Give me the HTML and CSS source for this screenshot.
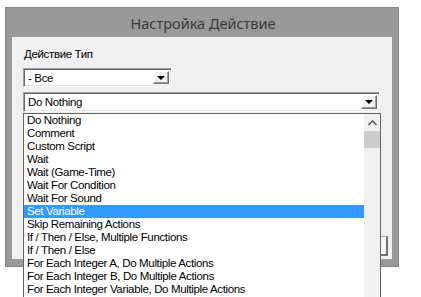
FILE: index.html
```html
<!DOCTYPE html>
<html>
<head>
<meta charset="utf-8">
<link rel="stylesheet" href="styles.css">
</head>
<body>
<div class="frame">
  <div class="title">Настройка Действие</div>
  <div class="panel">
    <div class="label">Действие Тип</div>
    <div class="combo combo-small"><span class="val">- Все</span><span class="btn"><span class="arrow"></span></span></div>
    <div class="combo combo-wide"><span class="val">Do Nothing</span><span class="btn"><span class="arrow"></span></span></div>
    <div class="buttons"><div class="pbtn"></div></div>
  </div>
</div>
<div class="dropdown">
  <ul class="items">
    <li>Do Nothing</li>
    <li>Comment</li>
    <li>Custom Script</li>
    <li>Wait</li>
    <li>Wait (Game-Time)</li>
    <li>Wait For Condition</li>
    <li>Wait For Sound</li>
    <li class="sel">Set Variable</li>
    <li>Skip Remaining Actions</li>
    <li>If / Then / Else, Multiple Functions</li>
    <li>If / Then / Else</li>
    <li>For Each Integer A, Do Multiple Actions</li>
    <li>For Each Integer B, Do Multiple Actions</li>
    <li>For Each Integer Variable, Do Multiple Actions</li>
  </ul>
  <div class="scroll">
    <div class="up"><svg width="9" height="6" viewBox="0 0 9 6"><path d="M0.5 5 L4.5 1 L8.5 5" fill="none" stroke="#606060" stroke-width="1.6"/></svg></div>
    <div class="thumb"></div>
  </div>
</div>
</body>
</html>
```
FILE: styles.css
```css
* { box-sizing: border-box; }
html, body { margin: 0; padding: 0; background: #ffffff; }
body { position: relative; width: 421px; height: 297px; overflow: hidden; font-family: "Liberation Sans", Arial, sans-serif; font-size: 11.5px; letter-spacing: -0.35px; color: #000; }

.frame {
  margin: 7px 0 0 5px;
  width: 394px;
  height: 260px;
  background: #999999;
  border: 1px solid #858585;
  padding: 0 6px;
}
.title {
  height: 29px;
  line-height: 30px;
  text-align: center;
  font-family: "Noto Sans", "Open Sans", sans-serif;
  font-size: 14.5px;
  letter-spacing: 0;
  color: #3a3a3a;
  padding-left: 2px;
}
.panel {
  width: 380px;
  height: 222px;
  background: #f0f0f0;
  padding: 11px 0 3px 11px;
  display: flex;
  flex-direction: column;
}
.label { height: 13px; line-height: 13px; padding-left: 1px; }

.combo {
  display: flex;
  align-items: stretch;
  height: 19px;
  background: #fff;
  border-top: 1px solid #a0a0a0;
  border-left: 1px solid #a0a0a0;
  border-right: 1px solid #ffffff;
  border-bottom: 1px solid #ffffff;
  box-shadow: inset 1px 1px 0 #696969, inset -1px -1px 0 #e3e3e3;
  padding: 2px;
}
.combo-small { width: 149px; margin-top: 7px; }
.combo-wide { width: 357px; margin-top: 5px; height: 20px; }
.val { flex: 1; line-height: 14px; padding-left: 2px; }
.btn {
  width: 16px;
  background: #f0f0f0;
  border-top: 1px solid #ffffff;
  border-left: 1px solid #ffffff;
  border-right: 1px solid #696969;
  border-bottom: 1px solid #696969;
  box-shadow: inset -1px -1px 0 #a0a0a0;
  display: flex;
  align-items: center;
  justify-content: center;
}
.arrow {
  width: 0; height: 0;
  border-left: 4px solid transparent;
  border-right: 4px solid transparent;
  border-top: 4px solid #000;
  margin-right: 1px;
}
.buttons { margin-top: auto; display: flex; justify-content: flex-end; padding-right: 4px; }
.pbtn {
  width: 75px; height: 20px;
  background: #f6f6f6;
  border: 1px solid #adadad;
  border-right: 2px solid #707070;
  border-bottom: 2px solid #707070;
}

.dropdown {
  position: absolute;
  left: 23px;
  top: 113px;
  width: 358px;
  height: 200px;
  background: #fff;
  border: 1px solid #646464;
  display: flex;
}
.items { list-style: none; margin: 0; padding: 0; flex: 1; }
.items li { height: 13px; line-height: 13px; padding-left: 3px; white-space: nowrap; overflow: hidden; }
.items li.sel { background: #3399ff; color: #fff; }
.scroll { width: 16px; background: #f0f0f0; }
.up { height: 17px; display: flex; align-items: center; justify-content: center; padding-top: 1px; }
.thumb { height: 17px; background: #cdcdcd; }
```
